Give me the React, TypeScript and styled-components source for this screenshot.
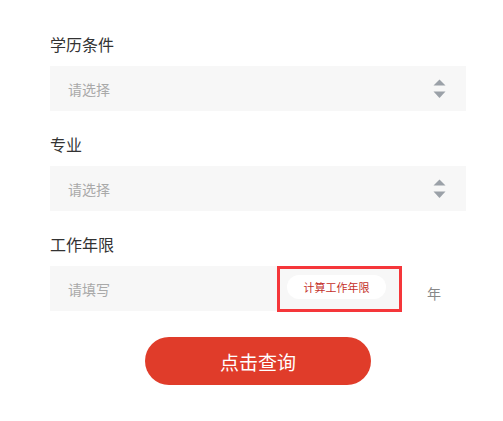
import React from "react";
import styled, { createGlobalStyle } from "styled-components";

const Global = createGlobalStyle`
  html, body { margin: 0; padding: 0; background: #ffffff; }
  body { font-family: "Microsoft YaHei", "Noto Sans CJK SC", "Noto Sans", sans-serif; }
  * { box-sizing: border-box; }
`;

const Page = styled.div`
  width: 503px;
  height: 421px;
  padding: 33px 37px 0 50px;
  display: flex;
  flex-direction: column;
`;

const Field = styled.div`
  display: flex;
  flex-direction: column;
  margin-bottom: 22px;
`;

const Label = styled.div`
  font-size: 16px;
  line-height: 22px;
  height: 22px;
  color: #333333;
  margin-bottom: 11px;
`;

const SelectBox = styled.div`
  height: 45px;
  background: #f7f7f7;
  display: flex;
  align-items: center;
  justify-content: space-between;
  padding: 0 20px 0 18px;
`;

const Placeholder = styled.span`
  font-size: 14px;
  color: #a9a9a9;
`;

const Row = styled.div`
  display: flex;
  align-items: center;
`;

const InputBox = styled.div`
  width: 349px;
  height: 45px;
  background: #f7f7f7;
  display: flex;
  align-items: center;
  justify-content: space-between;
  padding: 0 13px 0 18px;
`;

const PillWrap = styled.div`
  position: relative;
  display: flex;
`;

const Annotation = styled.div`
  position: absolute;
  left: -10px;
  right: -16px;
  top: -12px;
  bottom: -13px;
  border: 3px solid #f5363a;
  pointer-events: none;
`;

const Pill = styled.div`
  width: 99px;
  height: 24px;
  border-radius: 12px;
  background: #ffffff;
  color: #c4302a;
  font-size: 11px;
  display: flex;
  align-items: center;
  justify-content: center;
  margin-top: -3px;
`;

const Unit = styled.span`
  margin-left: 28px;
  font-size: 14px;
  color: #888888;
  margin-top: 8px;
`;

const ButtonRow = styled.div`
  display: flex;
  justify-content: center;
  margin-top: 4px;
`;

const Submit = styled.button`
  width: 226px;
  height: 48px;
  border: none;
  border-radius: 24px;
  background: #e03c2a;
  color: #ffffff;
  font-family: inherit;
  font-size: 19px;
  display: flex;
  align-items: center;
  justify-content: center;
  padding: 0;
`;

const Arrows = () => (
  <svg width="13" height="20" viewBox="0 0 13 20">
    <path d="M6.5 0.5 L12.5 6.5 L0.5 6.5 Z" fill="#9ba1a8" />
    <path d="M0.5 12.5 L12.5 12.5 L6.5 19 Z" fill="#9ba1a8" />
  </svg>
);

export default function App() {
  return (
    <>
      <Global />
      <Page>
        <Field>
          <Label>学历条件</Label>
          <SelectBox>
            <Placeholder>请选择</Placeholder>
            <Arrows />
          </SelectBox>
        </Field>
        <Field>
          <Label>专业</Label>
          <SelectBox>
            <Placeholder>请选择</Placeholder>
            <Arrows />
          </SelectBox>
        </Field>
        <Field>
          <Label>工作年限</Label>
          <Row>
            <InputBox>
              <Placeholder>请填写</Placeholder>
              <PillWrap>
                <Pill>计算工作年限</Pill>
                <Annotation />
              </PillWrap>
            </InputBox>
            <Unit>年</Unit>
          </Row>
        </Field>
        <ButtonRow>
          <Submit>点击查询</Submit>
        </ButtonRow>
      </Page>
    </>
  );
}
